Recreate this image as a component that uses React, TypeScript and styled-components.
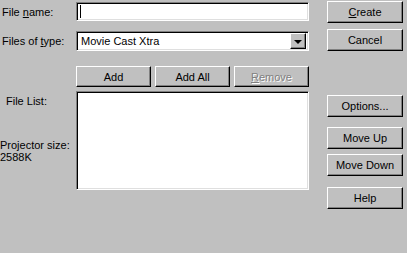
import React from 'react';
import styled, { createGlobalStyle } from 'styled-components';

const Global = createGlobalStyle`
  html, body {
    margin: 0;
    padding: 0;
    background: #c0c0c0;
  }
  body {
    font-family: "Liberation Sans", Arial, sans-serif;
    font-size: 11px;
    color: #000;
  }
`;

const Dialog = styled.div`
  width: 407px;
  height: 253px;
  background: #c0c0c0;
  display: flex;
  overflow: hidden;
`;

const Main = styled.div`
  display: flex;
  flex-direction: column;
  padding-top: 2px;
`;

const Row = styled.div<{ $top?: number; $align?: string }>`
  display: flex;
  align-items: ${(p) => p.$align ?? 'center'};
  margin-top: ${(p) => p.$top ?? 0}px;
`;

const LabelCol = styled.div`
  width: 76px;
  flex-shrink: 0;
  display: flex;
  flex-direction: column;
`;

const Label = styled.div<{ $top?: number; $left?: number }>`
  padding-left: ${(p) => p.$left ?? 2}px;
  margin-top: ${(p) => p.$top ?? 0}px;
  line-height: 12px;
  white-space: nowrap;
`;

const U = styled.span`
  text-decoration: underline;
`;

const Sunken = styled.div`
  box-sizing: border-box;
  width: 233px;
  background: #fff;
  border-top: 1px solid #808080;
  border-left: 1px solid #808080;
  border-right: 1px solid #fff;
  border-bottom: 1px solid #fff;
  box-shadow: inset 1px 1px 0 #000, inset -1px -1px 0 #dfdfdf;
`;

const TextField = styled(Sunken)`
  height: 19px;
  display: flex;
  align-items: center;
  padding-left: 3px;
`;

const Caret = styled.span`
  width: 1px;
  height: 13px;
  background: #000;
`;

const Select = styled(Sunken)`
  height: 20px;
  display: flex;
  align-items: center;
  padding: 2px;
  padding-left: 4px;
`;

const SelectText = styled.span`
  flex: 1;
`;

const Raised = styled.div`
  box-sizing: border-box;
  background: #c0c0c0;
  border-top: 1px solid #fff;
  border-left: 1px solid #fff;
  border-right: 1px solid #000;
  border-bottom: 1px solid #000;
  box-shadow: inset -1px -1px 0 #808080;
`;

const DropButton = styled(Raised)`
  width: 16px;
  height: 16px;
  display: flex;
  align-items: center;
  justify-content: center;
`;

const Arrow = styled.span`
  width: 0;
  height: 0;
  border-left: 4px solid transparent;
  border-right: 4px solid transparent;
  border-top: 4px solid #000;
  margin-top: 1px;
`;

const ButtonRow = styled.div`
  display: flex;
  gap: 4px;
  width: 233px;
`;

const Button = styled(Raised).attrs({ as: 'button' })<{ $disabled?: boolean; $top?: number }>`
  width: 76px;
  height: 22px;
  margin: 0;
  margin-top: ${(p) => p.$top ?? 0}px;
  padding: 0;
  font-family: "Liberation Sans", Arial, sans-serif;
  font-size: 11px;
  color: ${(p) => (p.$disabled ? '#808080' : '#000')};
  text-shadow: ${(p) => (p.$disabled ? '1px 1px 0 #fff' : 'none')};
  display: flex;
  align-items: center;
  justify-content: center;
  flex-shrink: 0;
`;

const SmallButton = styled(Button)`
  height: 21px;
  width: auto;
  flex: 1;
`;

const ListBox = styled(Sunken)`
  height: 99px;
`;

const Side = styled.div`
  display: flex;
  flex-direction: column;
  padding-left: 18px;
  padding-top: 1px;
`;

export default function App() {
  return (
    <>
      <Global />
      <Dialog>
        <Main>
          <Row>
            <LabelCol>
              <Label>
                File <U>n</U>ame:
              </Label>
            </LabelCol>
            <TextField>
              <Caret />
            </TextField>
          </Row>
          <Row $top={10}>
            <LabelCol>
              <Label>
                Files of <U>t</U>ype:
              </Label>
            </LabelCol>
            <Select>
              <SelectText>Movie Cast Xtra</SelectText>
              <DropButton>
                <Arrow />
              </DropButton>
            </Select>
          </Row>
          <Row $top={15}>
            <LabelCol />
            <ButtonRow>
              <SmallButton>Add</SmallButton>
              <SmallButton>Add All</SmallButton>
              <SmallButton $disabled>
                <U>R</U>emove
              </SmallButton>
            </ButtonRow>
          </Row>
          <Row $top={4} $align="flex-start">
            <LabelCol>
              <Label $top={4} $left={6}>File List:</Label>
              <Label $top={32} $left={0}>
                Projector size:
                <br />
                2588K
              </Label>
            </LabelCol>
            <ListBox />
          </Row>
        </Main>
        <Side>
          <Button>
            <U>C</U>reate
          </Button>
          <Button $top={6}>Cancel</Button>
          <Button $top={44}>Options...</Button>
          <Button $top={10}>Move Up</Button>
          <Button $top={5}>Move Down</Button>
          <Button $top={11}>Help</Button>
        </Side>
      </Dialog>
    </>
  );
}
